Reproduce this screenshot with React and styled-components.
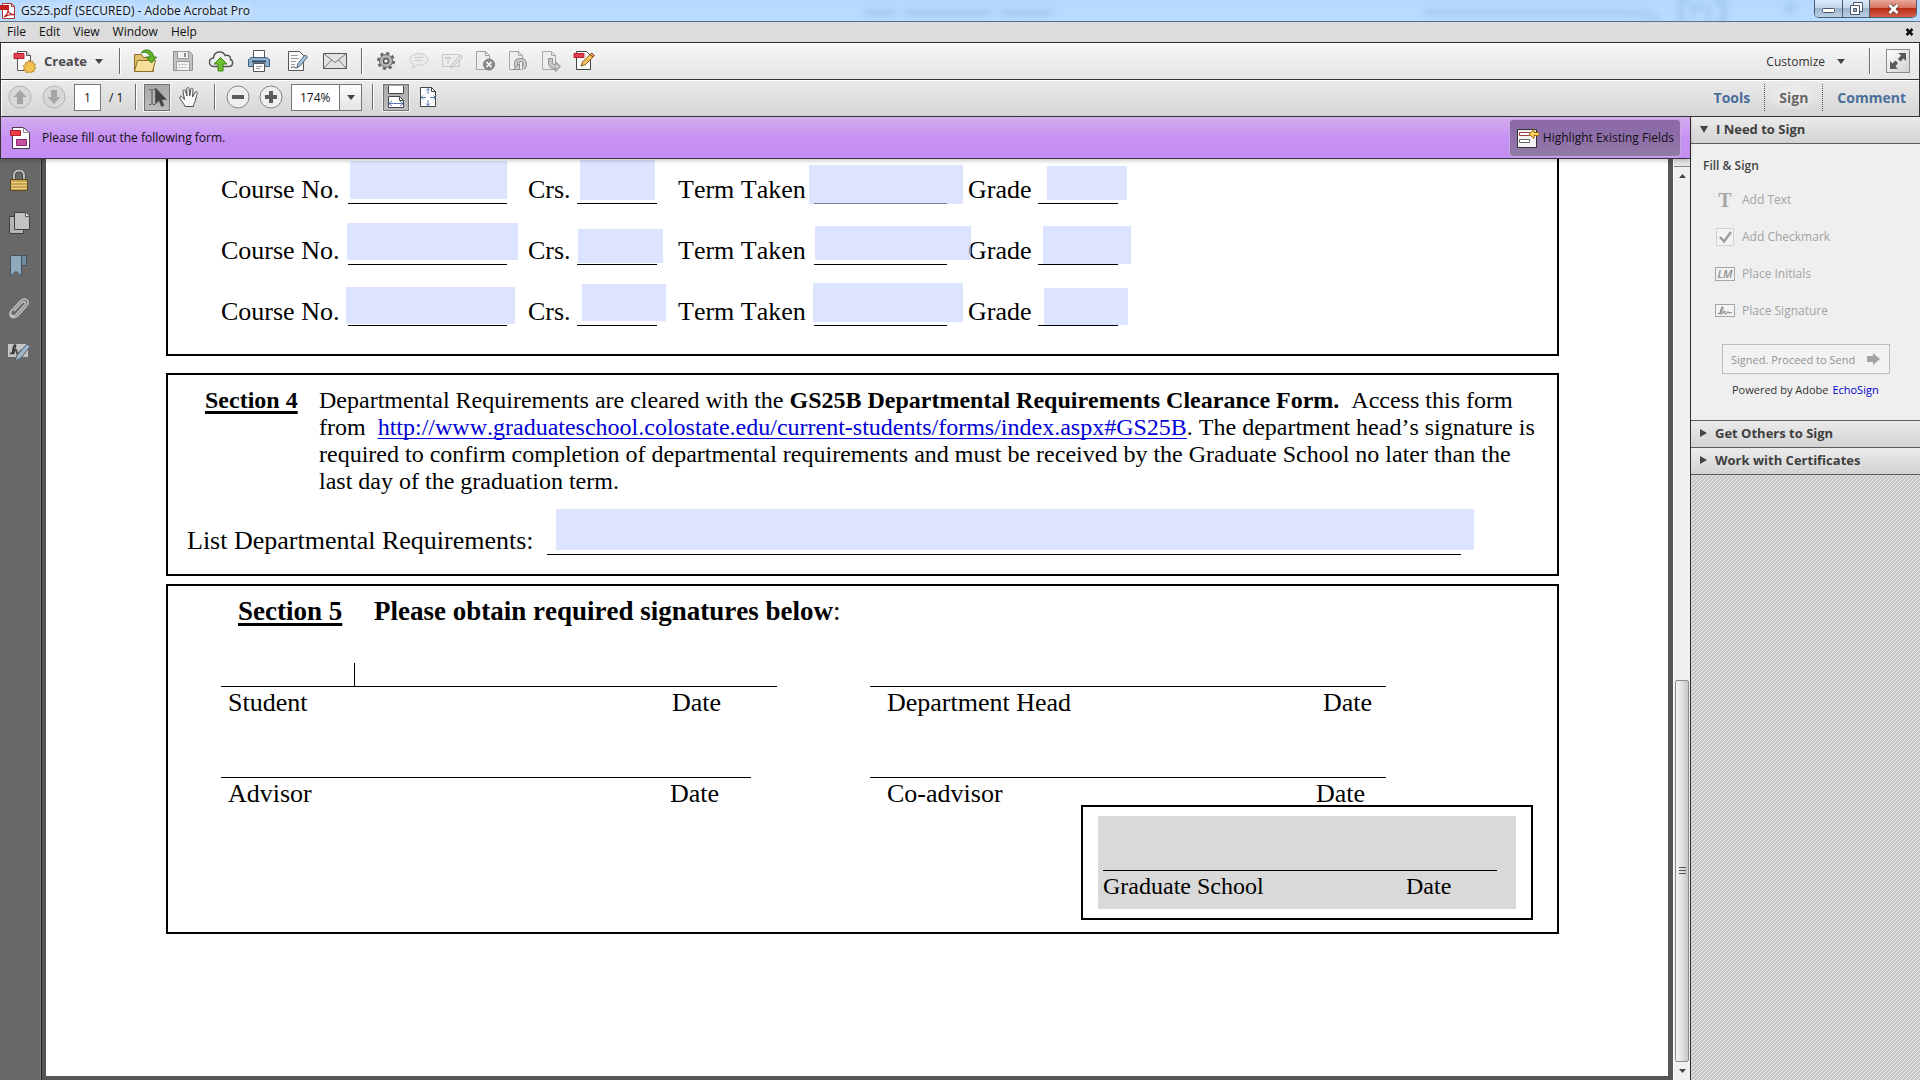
import React, { useState } from 'react';
import styled, { createGlobalStyle, css } from 'styled-components';

const GlobalStyle = createGlobalStyle`
  * {
    box-sizing: border-box;
  }
  body {
    margin: 0;
    overflow: hidden;
    font-family: "Open Sans", "Noto Sans", sans-serif;
    font-size: 12px;
    color: #111;
  }
  button, input, select {
    font-family: inherit;
    font-size: inherit;
    color: inherit;
    margin: 0;
    padding: 0;
    border-radius: 0;
  }
`;

const Window = styled.div`
  display: flex;
  flex-direction: column;
  height: 100vh;
  background: #686868;
`;

/* ---------- title bar and menu ---------- */

const TitleBar = styled.header`
  position: relative;
  display: flex;
  align-items: center;
  height: 22px;
  background: linear-gradient(#b4d8fd, #badcff);
  border-bottom: 1px solid #5d6f86;
`;

const Title = styled.h1`
  margin: 0;
  padding: 0 8px 0 4px;
  font-size: 12px;
  font-weight: 400;
  line-height: 20px;
  text-shadow: 0 0 6px #fff, 0 0 8px #fff;
`;

const Glass = styled.svg`
  position: absolute;
  top: 0;
  right: 0;
  width: 1100px;
  height: 21px;
  pointer-events: none;
`;

const WindowControls = styled.div`
  position: relative;
  display: flex;
  align-self: flex-start;
  margin-left: auto;
  margin-right: 3px;
  height: 18px;
  border: 1px solid #4c5d72;
  border-top: 0;
  border-radius: 0 0 5px 5px;
  overflow: hidden;
`;

const ControlButton = styled.button`
  display: flex;
  align-items: center;
  justify-content: center;
  width: ${({ $close }) => ($close ? '47px' : '27px')};
  border: 0;
  border-left: ${({ $first }) => ($first ? '0' : '1px solid #4c5d72')};
  background: ${({ $close }) => ($close
    ? 'linear-gradient(#e8a99c, #d8745f 45%, #b92e14 50%, #d2604a)'
    : 'linear-gradient(#dcebfa, #c2d6ea 45%, #9db4cb 50%, #b9d0e6)')};
`;

const MenuBar = styled.nav`
  display: flex;
  align-items: center;
  height: 21px;
  padding-left: 7px;
  padding-right: 6px;
  gap: 13px;
  background: #dcdcdc;
  border-bottom: 1px solid #2b2b2b;
`;

const MenuItem = styled.button`
  border: 0;
  background: none;
  line-height: 20px;
`;

const CloseDocument = styled(MenuItem)`
  display: flex;
  margin-left: auto;
`;

/* ---------- toolbars ---------- */

const Toolbar = styled.div`
  display: flex;
  align-items: center;
  height: 37px;
  padding-right: 9px;
  padding-bottom: ${({ $dark }) => ($dark ? '2px' : '0')};
  border: 1px solid #333;
  border-top: 0;
  box-shadow: inset 1px 1px 0 #fff;
  background: ${({ $dark }) => ($dark
    ? 'linear-gradient(#ebebeb, #d5d5d5)'
    : 'linear-gradient(#f6f6f6, #e5e5e5)')};
`;

const Separator = styled.span`
  width: 1px;
  height: 26px;
  margin: 0 ${({ $gap }) => $gap || 8}px;
  background: #6a6a6a;
  box-shadow: 1px 0 0 #fff;
`;

const ToolButton = styled.button`
  display: flex;
  align-items: center;
  justify-content: center;
  flex: none;
  width: ${({ $width }) => $width || 38}px;
  height: 28px;
  border: 0;
  background: none;
  ${({ $pressed }) => $pressed && css`
    width: 26px;
    height: 27px;
    border: 1px solid #707070;
    outline: 1px solid #f4f4f4;
    background: linear-gradient(#a9a9a9, #bdbdbd);
  `}
`;

const CreateButton = styled.button`
  display: flex;
  align-items: center;
  width: 101px;
  margin-left: 11px;
  gap: 8px;
  border: 0;
  background: none;
  font-size: 13px;
  font-weight: 700;
  color: #4a4a4a;
`;

const CustomizeButton = styled.button`
  display: flex;
  align-items: center;
  gap: 12px;
  margin-left: auto;
  margin-right: 16px;
  border: 0;
  background: none;
  color: #333;
`;

const ExpandButton = styled.button`
  display: flex;
  align-items: center;
  justify-content: center;
  width: 24px;
  height: 24px;
  margin-left: 8px;
  border: 1px solid #8a8a8a;
  background: linear-gradient(135deg, #fff, #d0d0d0);
`;

const PageInput = styled.input`
  width: 27px;
  height: 27px;
  margin-left: 5px;
  border: 1px solid #777;
  background: #fff;
  text-align: center;
`;

const PageCount = styled.span`
  width: 26px;
  padding-left: 8px;
`;

const ZoomBox = styled.div`
  position: relative;
  width: 71px;
  height: 27px;
  margin-left: 4px;
`;

const ZoomSelect = styled.select`
  appearance: none;
  width: 100%;
  height: 100%;
  padding-left: 8px;
  border: 1px solid #777;
  background: #fff;
`;

const ZoomArrow = styled.span`
  position: absolute;
  top: 1px;
  right: 1px;
  bottom: 1px;
  display: flex;
  align-items: center;
  justify-content: center;
  width: 22px;
  border-left: 1px solid #777;
  background: linear-gradient(#fdfdfd, #e4e4e4);
  pointer-events: none;
`;

const Tabs = styled.div`
  display: flex;
  margin-left: auto;
`;

const Tab = styled.button`
  height: 27px;
  padding: 0 14px;
  border: 0;
  border-left: ${({ $first }) => ($first ? '0' : '1px dotted #555')};
  background: ${({ $active }) => ($active
    ? 'radial-gradient(closest-side, #f2f2f2, transparent)'
    : 'none')};
  font-size: 14px;
  font-weight: 700;
  color: ${({ $active }) => ($active ? '#666' : '#4a6e9b')};
  &:last-child {
    padding-right: 4px;
  }
`;

/* ---------- body ---------- */

const Body = styled.div`
  display: flex;
  flex: 1;
  min-height: 0;
`;

const Main = styled.div`
  display: flex;
  flex: 1;
  flex-direction: column;
  min-width: 0;
`;

const MessageBar = styled.div`
  position: relative;
  z-index: 1;
  display: flex;
  align-items: center;
  justify-content: space-between;
  height: 42px;
  padding: 0 9px 0 8px;
  border-left: 1px solid #333;
  border-bottom: 1px solid #3b3440;
  background: linear-gradient(#d3adef, #c690f4 55%, #c38df3);
  box-shadow: 0 2px 4px rgba(0, 0, 0, 0.2);
`;

const Message = styled.p`
  display: flex;
  align-items: center;
  gap: 11px;
  margin: 0;
`;

const HighlightButton = styled.button`
  display: flex;
  align-items: center;
  gap: 4px;
  height: 38px;
  padding: 0 6px;
  border: 1px solid #c7a9dc;
  border-radius: 4px;
  background: linear-gradient(#8a6aa6, #8f6daa 50%, #917ba4);
`;

const Viewer = styled.div`
  display: flex;
  flex: 1;
  min-height: 0;
`;

const SideStrip = styled.aside`
  display: flex;
  flex-direction: column;
  align-items: center;
  gap: 15px;
  width: 42px;
  padding: 7px 4px 0 0;
  border-right: 1px solid #1e1e1e;
  background: #686868;
  box-shadow: inset -1px 0 0 #7e7e7e;
`;

const StripButton = styled.button`
  display: flex;
  align-items: center;
  justify-content: center;
  width: 28px;
  height: 28px;
  border: 0;
  background: none;
`;

const Canvas = styled.main`
  display: flex;
  flex: 1;
  min-width: 0;
  padding: 0 5px 4px 4px;
  background: #565656;
`;

const Sheet = styled.form`
  flex: 1;
  min-width: 0;
  padding: 0 109px 0 120px;
  background: #fff;
  font-family: "Liberation Serif", "Times New Roman", serif;
  font-size: 26px;
  font-kerning: none;
  line-height: 32px;
  color: #000;
`;

const Section = styled.section`
  border: 2px solid #000;
`;

const CourseSection = styled(Section)`
  display: flex;
  flex-direction: column;
  gap: 16px;
  padding: 0 0 28px 53px;
  border-top: 0;
`;

const CourseRow = styled.div`
  display: grid;
  grid-template-columns: 127px 180px 49px 101px 136px 154px 70px 80px;
  align-items: end;
  height: 45px;
  line-height: 28px;
`;

const Blank = styled.div`
  position: relative;
  width: ${({ $width }) => ($width ? `${$width}px` : 'auto')};
  height: 28px;
  border-bottom: 1px solid #000;
`;

// fill-in field laid over a printed blank, as a PDF viewer highlights it
const Field = styled.input`
  position: absolute;
  left: ${({ $left }) => $left}px;
  bottom: ${({ $bottom }) => $bottom}px;
  width: ${({ $width }) => $width};
  height: ${({ $height }) => $height}px;
  border: 0;
  outline: 0;
  background: rgba(198, 210, 255, 0.6);
`;

const ClearanceSection = styled(Section)`
  margin-top: 17px;
  padding: 12px 19px 19px;
`;

const Clause = styled.div`
  display: grid;
  grid-template-columns: 114px 1fr;
  margin-left: 18px;
  font-size: 24px;
  line-height: 27px;
`;

const SectionName = styled.h2`
  margin: 0;
  font-size: inherit;
  font-weight: 700;
  text-decoration: underline;
  text-decoration-thickness: 3px;
  text-underline-offset: 3px;
  text-decoration-skip-ink: none;
`;

const ClauseText = styled.p`
  margin: 0;
`;

const FormLink = styled.a`
  color: #0000d8;
  text-decoration-thickness: 1px;
  text-underline-offset: 3px;
  text-decoration-skip-ink: none;
`;

const RequirementsRow = styled.div`
  display: grid;
  grid-template-columns: 360px 1fr;
  margin: 32px 77px 0 0;
  line-height: 28px;
`;

const SignatureSection = styled(Section)`
  display: flex;
  flex-direction: column;
  margin-top: 8px;
  padding: 9px 24px 12px 53px;
`;

const SignatureHeading = styled.div`
  display: grid;
  grid-template-columns: 136px 1fr;
  margin-left: 17px;
  font-size: 27px;
`;

const SignatureTitle = styled.p`
  margin: 0;
`;

const SignatureGrid = styled.div`
  display: grid;
  grid-template-columns: 649px 1fr;
  row-gap: 58px;
  margin-top: 59px;
`;

const Signature = styled.div`
  position: relative;
  display: grid;
  grid-template-columns: ${({ $dateAt }) => $dateAt}px 1fr;
  width: ${({ $width }) => $width}px;
  border-top: 1px solid #000;
`;

const Signer = styled.span`
  padding-left: ${({ $indent }) => $indent}px;
`;

const Caret = styled.span`
  position: absolute;
  left: 133px;
  bottom: 33px;
  width: 1px;
  height: 23px;
  background: #000;
`;

const OfficeBox = styled.div`
  align-self: flex-end;
  width: 452px;
  margin-top: -5px;
  padding: 9px 15px;
  border: 2px solid #000;
`;

const OfficeUse = styled.div`
  height: 93px;
  padding: 54px 19px 0 5px;
  background: #d9d9d9;
  font-size: 24px;
  line-height: 30px;
`;

const OfficeLine = styled.div`
  display: grid;
  grid-template-columns: 303px 1fr;
  border-top: 1px solid #000;
`;

const ScrollBar = styled.div`
  display: flex;
  flex-direction: column;
  align-items: center;
  width: 17px;
  background: #f0f0f0;
  border-left: 1px solid #fff;
`;

const SplitBox = styled.div`
  width: 100%;
  height: 8px;
  border-bottom: 1px solid #888;
  background: #e6e6e6;
`;

const ScrollButton = styled.button`
  display: flex;
  align-items: center;
  justify-content: center;
  width: 17px;
  height: 18px;
  border: 0;
  background: none;
`;

const Track = styled.div`
  flex: 496;
`;

const Thumb = styled.div`
  display: flex;
  flex: 381;
  flex-direction: column;
  align-items: center;
  justify-content: center;
  gap: 2px;
  width: 14px;
  border: 1px solid #8b8b8b;
  border-radius: 2px;
  background: linear-gradient(90deg, #f5f5f5, #e4e4e4 45%, #c6c6c8);
`;

const Grip = styled.span`
  width: 7px;
  height: 1px;
  background: #555;
`;

/* ---------- sign panel ---------- */

const Panel = styled.aside`
  display: flex;
  flex-direction: column;
  width: 230px;
  border-left: 1px solid #2c2c2c;
  background: #c9c9c9 linear-gradient(135deg, #ececec 12.5%, #c6c6c6 12.5% 50%, #ececec 50% 62.5%, #c6c6c6 62.5%) 0 0 / 4px 4px;
`;

const PanelHeader = styled.button`
  display: flex;
  align-items: center;
  gap: 8px;
  height: 27px;
  padding: 0 0 2px 9px;
  border: 0;
  border-bottom: 1px solid #5c5c5c;
  background: linear-gradient(#ebebeb, #d3d3d3);
  font-size: 13px;
  font-weight: 700;
  text-align: left;
  color: #3f3f3f;
`;

const PanelBody = styled.div`
  height: 277px;
  padding: 12px 12px 0;
  background: #efefef;
  border-bottom: 1px solid #5c5c5c;
`;

const PanelTitle = styled.h3`
  margin: 0 0 5px;
  font-size: 12px;
  font-weight: 600;
  line-height: 20px;
  color: #444;
`;

const PanelAction = styled.button`
  display: flex;
  align-items: center;
  gap: 7px;
  height: 37px;
  padding-left: 12px;
  border: 0;
  background: none;
  color: #a3a3a3;
`;

const IconSlot = styled.span`
  display: flex;
  justify-content: center;
  width: 20px;
`;

const LetterIcon = styled.span`
  font-family: "Liberation Serif", serif;
  font-size: 20px;
  font-weight: 700;
  line-height: 20px;
  color: #a6a6a6;
`;

const SendButton = styled.button`
  display: flex;
  align-items: center;
  justify-content: space-between;
  width: 168px;
  height: 30px;
  margin: 15px 0 0 19px;
  padding: 0 9px 0 8px;
  border: 1px solid #bdbdbd;
  background: #f2f2f2;
  font-size: 11px;
  color: #939393;
`;

const Powered = styled.p`
  margin: 6px 0 0 29px;
  font-size: 11px;
  line-height: 20px;
  color: #333;
`;

const EchoLink = styled.a`
  margin-left: 1px;
  color: #0000d0;
  text-decoration: none;
`;

/* ---------- icons ---------- */

const Svg = ({ size = 24, w, h, children }) => (
  <svg
    width={w || size}
    height={h || size}
    viewBox={`0 0 ${w || size} ${h || size}`}
    fill='none'
    stroke='#555'
    aria-hidden='true'
  >
    {children}
  </svg>
);

const Arrow = ({ dir = 'down', w = 8, h = 5, color = '#444' }) => {
  const points = {
    down: `0,0 ${w},0 ${w / 2},${h}`,
    up: `0,${h} ${w},${h} ${w / 2},0`,
    right: `0,0 ${w},${h / 2} 0,${h}`,
  };
  return (
    <Svg w={w} h={h}><polygon points={points[dir]} fill={color} stroke='none' /></Svg>
  );
};

const AcrobatIcon = () => (
  <Svg w={17} h={18}>
    <path d='M2.500 1.500h9l3 3v12h-12z' fill='#fff' stroke='#a33' />
    <path d='M11.500 1.500v3h3' stroke='#a33' />
    <path d='M0 3h9v5H0z' fill='#c11f1f' stroke='none' />
    <path d='M4 15c3-2 4.500-6 4-9-1 3 2 7 6 6.500-4-.5-7 .5-10 2.500z' stroke='#c11f1f' strokeWidth='1.300' />
  </Svg>
);

const CreateIcon = () => (
  <Svg w={24} h={24}>
    <path d='M5.500 2.500h9l4 4v15h-13z' fill='#fafafa' />
    <path d='M14.500 2.500v4h4' fill='#ddd' />
    <path d='M2 4.500h10v5H2z' fill='#e2404a' stroke='#b3202a' />
    <path d='M17 11l1.500 2 2.300-.8.2 2.400 2.400.6-1 2.300 1.600 1.700-2.100 1.200.1 2.400-2.400-.2-1.300 2-1.800-1.600-2.200.9-.5-2.300-2.300-.6 1-2.200-1.300-2 2.200-1.100.2-2.300 2.400.1z' fill='#f2bf52' stroke='#c08a2b' />
  </Svg>
);

const OpenIcon = () => (
  <Svg w={26} h={26}>
    <path d='M2.500 23.500v-17h7l2 3h10v14z' fill='#e0c06c' stroke='#8f6d22' />
    <path d='M2.500 23.500l3-11h18l-3 11z' fill='#f6df9b' stroke='#8f6d22' />
    <path d='M9 5c3-5 12-4 12.500 4h3l-5 6-5.500-6H18c-.5-4-5-6-9-4z' fill='#63b329' stroke='#3a7d14' />
  </Svg>
);

const SaveIcon = () => (
  <Svg w={22} h={22}>
    <path d='M1.500 1.500h16l3 3v16h-19z' fill='#c2c2c2' stroke='#8f8f8f' />
    <path d='M5.500 1.500h11v7h-11zM4.500 11.500h13v9h-13z' fill='#f1f1f1' stroke='#9a9a9a' />
    <path d='M12 3h2v4h-2z' fill='#8f8f8f' stroke='none' />
    <path d='M6.500 14.500h9M6.500 17.500h9' stroke='#b5b5b5' strokeDasharray='2 1' />
  </Svg>
);

const CloudIcon = () => (
  <Svg w={26} h={22}>
    <path d='M6 16.500c-6-.5-6-8-.5-8.500C6 1 15 0 17 5.500c4-.8 6 1 5.500 4 3.500 1.500 2.500 7-1.500 7z' fill='#f0f0f0' stroke='#555' strokeWidth='1.400' />
    <path d='M12.500 7.500l6.500 6.500h-4v7h-5v-7H6z' fill='#6cc031' stroke='#3c8713' />
  </Svg>
);

const PrintIcon = () => (
  <Svg w={24} h={24}>
    <path d='M6.500 1.500h11v9h-11z' fill='#fdfdfd' />
    <path d='M1.500 10.500l3-2h15l3 2v7h-21z' fill='#8fb0cf' stroke='#3f5f80' />
    <path d='M5 12.500h14' stroke='#2f4a66' strokeWidth='2' />
    <path d='M6.500 14.500h11v8h-11z' fill='#fdfdfd' />
    <path d='M9 17.500h6M9 19.500h4' stroke='#999' />
  </Svg>
);

const EditIcon = () => (
  <Svg w={24} h={24}>
    <path d='M3.500 2.500h11l4 4v15h-15z' fill='#fafafa' />
    <path d='M6 6.500h7M6 9.500h8M6 12.500h5M6 15.500h4' stroke='#999' />
    <path d='M12 18.500l1-4L20 6l2.500 2-7 8.500z' fill='#a9c5dc' stroke='#4a6780' />
    <path d='M6 19c2-2 3-1 4-.5s2 .5 3-.5' stroke='#444' />
  </Svg>
);

const MailIcon = () => (
  <Svg w={26} h={18}>
    <path d='M1.500 1.500h23v15h-23z' fill='#e2e2e2' />
    <path d='M1.500 1.500l11.500 9 11.500-9M1.500 16.500l8-8.500M24.500 16.500l-8-8.500' stroke='#777' />
  </Svg>
);

const GearIcon = () => (
  <Svg w={20} h={20}>
    <circle cx='10' cy='10' r='7.500' stroke='#666' strokeWidth='3' strokeDasharray='3 2.890' />
    <circle cx='10' cy='10' r='6.500' fill='#b5b5b5' stroke='#666' />
    <circle cx='10' cy='10' r='2.500' fill='#eee' stroke='#555' strokeWidth='1.500' />
  </Svg>
);

const CommentIcon = () => (
  <Svg w={22} h={18}>
    <path d='M4.500 16.500l1-4c-6-3-4-11 5.500-11s13 10 2 11.500c-2 0-3 0-4-.3z' fill='#ebebeb' stroke='#cacaca' />
    <path d='M6.500 5.500h9M6.500 8.500h7' stroke='#cacaca' />
  </Svg>
);

const TextBoxIcon = () => (
  <Svg w={22} h={18}>
    <path d='M18.500 9v5.500h-17v-12h17' stroke='#c4c4c4' />
    <path d='M4.500 7.500v-2h5v2M7 5.500v6' stroke='#bdbdbd' />
    <path d='M10 16l1-4 8.500-9 2 2-8.500 9z' fill='#e2e2e2' stroke='#c0c0c0' />
  </Svg>
);

const PageDeleteIcon = () => (
  <Svg w={24} h={24}>
    <path d='M3.500 2.500h9l4 4v14h-13z' fill='#eee' stroke='#a2a2a2' />
    <path d='M12.500 2.500v4h4' stroke='#a2a2a2' />
    <circle cx='16' cy='15.500' r='5.500' fill='#8d8d8d' stroke='#777' />
    <path d='M13.500 13l5 5M18.500 13l-5 5' stroke='#fff' strokeWidth='1.500' />
  </Svg>
);

const PageRotateIcon = () => (
  <Svg w={24} h={24}>
    <path d='M3.500 2.500h9l4 4v14h-13z' fill='#eee' stroke='#a8a8a8' />
    <path d='M12.500 2.500v4h4' stroke='#a8a8a8' />
    <path d='M12 19c-4-3-2-8 2.500-8s6 5 2.500 8' stroke='#8e8e8e' strokeWidth='4' />
    <path d='M12 19c-4-3-2-8 2.500-8s6 5 2.500 8' stroke='#d0d0d0' strokeWidth='2' />
    <path d='M7.500 20.500h6v-6z' fill='#d0d0d0' stroke='#8e8e8e' />
  </Svg>
);

const PageExportIcon = () => (
  <Svg w={24} h={24}>
    <path d='M3.500 2.500h9l4 4v14h-13z' fill='#eee' stroke='#a8a8a8' />
    <path d='M12.500 2.500v4h4' stroke='#a8a8a8' />
    <path d='M9.500 9.500h4v4c0 1.500 1 2 3 2v-3l5 5-5 5v-3c-5 0-7-1.500-7-5.500z' fill='#c4c4c4' stroke='#8e8e8e' />
  </Svg>
);

const PencilPageIcon = () => (
  <Svg w={24} h={24}>
    <path d='M4.500 2.500h10l4 4v14h-14z' fill='#fafafa' stroke='#444' />
    <path d='M2 4.500h10v4H2z' fill='#e2404a' stroke='#b3202a' />
    <path d='M9 17l1.500-4L18 5.500l3 2.500-7.500 7.500z' fill='#f4c05a' stroke='#8a5a1e' />
    <path d='M18 5.500l1.500-1.500 3 2.500L21 8z' fill='#e58a80' stroke='#8a5a1e' />
  </Svg>
);

const RoundIcon = ({ kind }) => {
  const shapes = {
    up: 'M12 5l6.500 7H15v7H9v-7H5.500z',
    down: 'M12 19l6.500-7H15V5H9v7H5.500z',
    minus: 'M6 10h12v4H6z',
    plus: 'M10 6h4v4h4v4h-4v4h-4v-4H6v-4h4z',
  };
  const faded = kind === 'up' || kind === 'down';
  return (
    <Svg>
      <circle cx='12' cy='12' r='11' fill={faded ? '#d8d8d8' : '#efefef'} stroke={faded ? '#b4b4b4' : '#848484'} />
      <path d={shapes[kind]} fill={faded ? '#a5a5a5' : '#5c5c5c'} stroke='none' />
    </Svg>
  );
};

const SelectIcon = () => (
  <Svg w={20} h={22}>
    <path d='M2 3.500h2l1 1 1-1h2M5 4v14M2 18.500h2l1-1 1 1h2' stroke='#555' />
    <path d='M8.500 2v16l3.500-3.500 2.500 6 2.500-1-2.500-6h5z' fill='#444' stroke='#444' strokeWidth='.5' />
  </Svg>
);

const HandIcon = () => (
  <Svg w={22} h={22}>
    <path
      d='M7 20.500c-1-3-4-5.500-5-8.500-.5-2 1.500-2.500 2.500-1l2 2.500L5 5.500c-.3-2 1.700-2.500 2.300-.7L9 10 8.700 3c0-2 2.300-2 2.500 0l.5 7 1-6.500c.3-2 2.500-1.500 2.300.5L14.500 11 17 6.500c1-1.700 2.800-.6 2.200 1-1 3-1.200 6-2.700 9-.6 1.300-1 2.500-1 4z'
      fill='#fafafa'
      stroke='#4d4d4d'
    />
  </Svg>
);

const FitWidthIcon = () => (
  <Svg w={20} h={24}>
    <path d='M2.500 1v7.500h15V1' fill='#fff' stroke='#444' />
    <path d='M2.500 22.500v-11h11l4 4v7z' fill='#fff' stroke='#444' />
    <path d='M13.500 11.500v4h4' stroke='#444' />
    <path d='M3 18.500h14M6 16l-3 2.500L6 21M14 16l3 2.500-3 2.500' stroke='#5b7ab8' />
  </Svg>
);

const FitPageIcon = () => (
  <Svg w={20} h={22}>
    <path d='M2.500 1.500h11l4 4v15h-15z' fill='#fff' stroke='#444' />
    <path d='M13.500 1.500v4h4' stroke='#444' />
    <path d='M3 11.500h5M12 11.500h6M10 2.500v5.500M10 14v6M5 9.500l-2 2 2 2M15.500 9.500l2 2-2 2M8 4.500l2-2 2 2M8 17.500l2 2 2-2' stroke='#5b7ab8' />
  </Svg>
);

const ExpandIcon = () => (
  <Svg w={20} h={20}>
    <path d='M10 2h8v8l-2.500-2.500-3 3-2.500-2.500 3-3.500zM10 18H2v-8l2.500 2.500L7.500 9.500l2.500 2.500-2.500 3.500z' fill='#5a5a5a' stroke='none' />
  </Svg>
);

const FormIcon = () => (
  <Svg w={22} h={24}>
    <path d='M3.500 1.500h11l6 5v16h-17z' fill='#fff' stroke='#4a3a50' />
    <path d='M14.500 1.500v5h5' stroke='#8a8a8a' />
    <path d='M1.500 4.500h10v5h-10z' fill='#ee4048' stroke='#b3202a' />
    <path d='M7.500 13.500h10v6h-10z' fill='#c452a0' stroke='#8d2b73' />
  </Svg>
);

const HighlightIcon = () => (
  <Svg w={23} h={22}>
    <path d='M1.500 2.500h19v18h-19z' fill='#f6f1f3' stroke='#333' />
    <path d='M3.500 5.500h10v3h-10z' fill='#fff' stroke='#9c4040' />
    <path d='M3.500 12.500h10v3h-10z' fill='#fff' stroke='#666' />
    <path d='M13 7l5-4.500v3h5v3h-5v3z' fill='#ffd35a' stroke='#a06a10' />
  </Svg>
);

const LockIcon = () => (
  <Svg w={22} h={24}>
    <path d='M6 12V7c0-6 10-6 10 0v5' stroke='#4a4a4a' strokeWidth='4' />
    <path d='M6 12V7c0-6 10-6 10 0v5' stroke='#bdbdbd' strokeWidth='2' />
    <path d='M2.500 11.500h17v11h-17z' fill='#c9a44c' stroke='#5b4a20' />
    <path d='M3 14.500h16M3 17.500h16M3 20.500h16' stroke='#e5cd8b' />
  </Svg>
);

const PagesIcon = () => (
  <Svg w={24} h={24}>
    <path d='M2.500 5.500h14v17h-14z' fill='#b5b5b5' stroke='#3f3f3f' />
    <path d='M7.500 1.500h11l4 4v13h-15z' fill='#c2c2c2' stroke='#3f3f3f' />
    <path d='M18.500 1.500v4h4' fill='#eee' stroke='#555' />
  </Svg>
);

const BookmarkIcon = () => (
  <Svg w={20} h={24}>
    <path d='M11.500 1.500h6v10h-6z' fill='#6f8ba0' stroke='#3f5060' />
    <path d='M1.500 1.500h11v20.500l-5.500-4.500-5.500 4.500z' fill='#8faabd' stroke='#46535e' />
  </Svg>
);

const ClipIcon = () => (
  <Svg w={24} h={24}>
    <path
      d='M7 14l8-8.500c2-2 4.500 0 3 2L9 17.500c-3 3-7.500 0-4.500-4l9-9.500c4.500-4.500 10 0 6.500 4.500L11 18.500c-4 4.500-10.500 1-7-4.500'
      stroke='#c0c0c0'
      strokeWidth='1.600'
    />
  </Svg>
);

const SignIcon = () => (
  <Svg w={26} h={22}>
    <path d='M2 3h20v13H2z' fill='#c4c4c4' stroke='none' />
    <path d='M4 13c4-2 7-9 5-9s-3 9-2 9 2-5 3.500-4-.5 4 1 4 3-3 4-4' stroke='#333' strokeWidth='1.400' />
    <path d='M9 20l2-6L21 3l3 2.500L15 17z' fill='#9fb6c9' stroke='#4f5f6e' />
  </Svg>
);

const CheckIcon = () => (
  <Svg w={18} h={18}>
    <path d='M.5.5h17v17H.5z' fill='#f3f3f3' stroke='#d2d2d2' />
    <path d='M4 9l4 4.500L15 4' stroke='#9e9e9e' strokeWidth='2.500' />
  </Svg>
);

const InitialsIcon = () => (
  <svg width='20' height='14' viewBox='0 0 20 14' aria-hidden='true'>
    <rect x='.5' y='.5' width='19' height='13' fill='#f3f3f3' stroke='#a6a6a6' />
    <text x='10' y='11' textAnchor='middle' fontFamily='Open Sans, sans-serif' fontSize='11' fontStyle='italic' fontWeight='600' fill='#8f8f8f'>LM</text>
  </svg>
);

const SignatureIcon = () => (
  <Svg w={20} h={13}>
    <rect x='.5' y='.5' width='19' height='12' fill='#f3f3f3' stroke='#a6a6a6' />
    <path d='M3 10c4-1 6-7 4.500-7S4.500 10 6 10s2.500-3 3.500-3-.5 3 1 3 1.500-2.500 2.500-2 .5 1.500 4 .5' stroke='#8f8f8f' strokeWidth='1.200' />
  </Svg>
);

const SendArrow = () => (
  <Svg w={13} h={12}>
    <path d='M0 3h6V0l7 6-7 6V9H0z' fill='#a3a3a3' stroke='none' />
  </Svg>
);

/* ---------- data ---------- */

const MENUS = ['File', 'Edit', 'View', 'Window', 'Help'];

const FILE_TOOLS = [
  ['Open', OpenIcon],
  ['Save', SaveIcon],
  ['Save to Acrobat.com', CloudIcon],
  ['Print', PrintIcon],
  ['Edit', EditIcon],
  ['Email', MailIcon],
];

const QUICK_TOOLS = [
  ['Preferences', GearIcon],
  ['Add comment', CommentIcon],
  ['Add text box', TextBoxIcon],
  ['Delete pages', PageDeleteIcon],
  ['Rotate pages', PageRotateIcon],
  ['Export page', PageExportIcon],
  ['Edit document', PencilPageIcon],
];

const STRIP = [
  ['Security', LockIcon],
  ['Page thumbnails', PagesIcon],
  ['Bookmarks', BookmarkIcon],
  ['Attachments', ClipIcon],
  ['Signatures', SignIcon],
];

const COLUMNS = [
  { label: 'Course No.', blank: 159 },
  { label: 'Crs.', blank: 80 },
  { label: 'Term Taken', blank: 133 },
  { label: 'Grade', blank: 80 },
];

// [left, bottom, width, height] against the blank below each field
const COURSES = [
  [[2, 4, 157, 38], [3, 3, 75, 40], [-5, -1, 154, 39], [9, 3, 80, 34]],
  [[-1, 4, 171, 37], [1, 1, 85, 34], [1, 4, 156, 34], [5, 0, 88, 38]],
  [[-2, 1, 169, 37], [5, 4, 84, 37], [-1, 3, 150, 39], [6, 0, 84, 37]],
];

const SIGNATURES = [
  { name: 'Student', width: 556, indent: 7, dateAt: 451, caret: true },
  { name: 'Department Head', width: 516, indent: 17, dateAt: 453 },
  { name: 'Advisor', width: 530, indent: 7, dateAt: 449 },
  { name: 'Co-advisor', width: 516, indent: 17, dateAt: 446 },
];

const PANEL_ACTIONS = [
  ['Add Text', () => <LetterIcon aria-hidden='true'>T</LetterIcon>],
  ['Add Checkmark', CheckIcon],
  ['Place Initials', InitialsIcon],
  ['Place Signature', SignatureIcon],
];

/* ---------- parts ---------- */

const TitleRow = () => (
  <TitleBar>
    <Glass viewBox='0 0 1100 21' aria-hidden='true'>
      <defs>
        <filter id='glass' x='-10%' y='-100%' width='120%' height='300%'>
          <feGaussianBlur stdDeviation='3' />
        </filter>
      </defs>
      <g filter='url(#glass)' fill='none' stroke='#7fa6d0' opacity='.5'>
        <path d='M45 13h30M85 13h85M180 13h52' strokeWidth='4' />
        <path d='M605 13h200c20 0 30 4 35 8' strokeWidth='5' opacity='.7' />
        <circle cx='882' cy='12' r='22' strokeWidth='6' opacity='.7' />
        <path d='M873 20v-14l16 4v12' strokeWidth='4' opacity='.7' />
        <circle cx='970' cy='9' r='3' strokeWidth='4' opacity='.7' />
      </g>
    </Glass>
    <AcrobatIcon />
    <Title>GS25.pdf (SECURED) - Adobe Acrobat Pro</Title>
    <WindowControls>
      <ControlButton $first aria-label='Minimize'>
        <Svg w={13} h={10}><rect x='.5' y='4.500' width='12' height='4' rx='1' fill='#fff' stroke='#4a586c' /></Svg>
      </ControlButton>
      <ControlButton aria-label='Restore'>
        <Svg w={13} h={13}>
          <path d='M3.500.5h9v9h-9z' fill='#fff' stroke='#4a586c' />
          <path d='M.5 3.500h9v9h-9z' fill='#fff' stroke='#4a586c' />
          <path d='M3.500 6.500h3v3h-3z' fill='#9db4cb' stroke='#4a586c' />
        </Svg>
      </ControlButton>
      <ControlButton $close aria-label='Close'>
        <Svg w={13} h={12}>
          <path d='M2.500 2l8 8M10.500 2l-8 8' stroke='#5b3a3a' strokeWidth='4.500' />
          <path d='M2.500 2l8 8M10.500 2l-8 8' stroke='#fff' strokeWidth='2.800' />
        </Svg>
      </ControlButton>
    </WindowControls>
  </TitleBar>
);

const MainToolbar = () => (
  <Toolbar>
    <CreateButton>
      <CreateIcon />
      Create
      <Arrow />
    </CreateButton>
    <Separator $gap={6} />
    {FILE_TOOLS.map(([label, Icon]) => (
      <ToolButton key={label} aria-label={label}><Icon /></ToolButton>
    ))}
    <Separator $gap={7} />
    {QUICK_TOOLS.map(([label, Icon]) => (
      <ToolButton key={label} $width={33} aria-label={label}><Icon /></ToolButton>
    ))}
    <CustomizeButton>
      Customize
      <Arrow />
    </CustomizeButton>
    <Separator />
    <ExpandButton aria-label='Read mode'><ExpandIcon /></ExpandButton>
  </Toolbar>
);

const PageToolbar = () => {
  const [page, setPage] = useState('1');

  return (
    <Toolbar $dark>
      <ToolButton aria-label='Previous page'><RoundIcon kind='up' /></ToolButton>
      <ToolButton $width={30} aria-label='Next page'><RoundIcon kind='down' /></ToolButton>
      <PageInput aria-label='Page number' value={page} onChange={(e) => setPage(e.target.value)} />
      <PageCount>/ 1</PageCount>
      <Separator />
      <ToolButton $pressed aria-label='Select tool'><SelectIcon /></ToolButton>
      <ToolButton aria-label='Hand tool'><HandIcon /></ToolButton>
      <Separator $gap={6} />
      <ToolButton $width={33} aria-label='Zoom out'><RoundIcon kind='minus' /></ToolButton>
      <ToolButton $width={33} aria-label='Zoom in'><RoundIcon kind='plus' /></ToolButton>
      <ZoomBox>
        <ZoomSelect aria-label='Zoom' defaultValue='174%'>
          <option>174%</option>
        </ZoomSelect>
        <ZoomArrow><Arrow /></ZoomArrow>
      </ZoomBox>
      <Separator $gap={10} />
      <ToolButton $pressed aria-label='Fit width'><FitWidthIcon /></ToolButton>
      <ToolButton aria-label='Fit page'><FitPageIcon /></ToolButton>
      <Tabs>
        <Tab $first>Tools</Tab>
        <Tab $active>Sign</Tab>
        <Tab>Comment</Tab>
      </Tabs>
    </Toolbar>
  );
};

const CourseLine = ({ row, fields }) => (
  <CourseRow>
    {COLUMNS.map(({ label, blank }, i) => {
      const [left, bottom, width, height] = fields[i];
      const id = `course-${row}-${i}`;
      return (
        <React.Fragment key={id}>
          <label htmlFor={id}>{label}</label>
          <Blank $width={blank}>
            <Field id={id} $left={left} $bottom={bottom} $width={`${width}px`} $height={height} />
          </Blank>
        </React.Fragment>
      );
    })}
  </CourseRow>
);

const Document = () => (
  <Sheet>
    <CourseSection>
      {COURSES.map((fields, row) => <CourseLine key={row} row={row} fields={fields} />)}
    </CourseSection>

    <ClearanceSection>
      <Clause>
        <SectionName>Section 4</SectionName>
        <ClauseText>
          Departmental Requirements are cleared with the{' '}
          <b>GS25B Departmental Requirements Clearance Form.</b>&nbsp; Access this form from&nbsp;{' '}
          <FormLink href='http://www.graduateschool.colostate.edu/current-students/forms/index.aspx#GS25B'>
            http://www.graduateschool.colostate.edu/current-students/forms/index.aspx#GS25B
          </FormLink>
          . The department head’s signature is required to confirm completion of departmental
          requirements and must be received by the Graduate School no later than the last day of
          the graduation term.
        </ClauseText>
      </Clause>
      <RequirementsRow>
        <label htmlFor='requirements'>List Departmental Requirements:</label>
        <Blank>
          <Field id='requirements' $left={9} $bottom={4} $width='calc(100% + 4px)' $height={41} />
        </Blank>
      </RequirementsRow>
    </ClearanceSection>

    <SignatureSection>
      <SignatureHeading>
        <SectionName>Section 5</SectionName>
        <SignatureTitle><b>Please obtain required signatures below</b>:</SignatureTitle>
      </SignatureHeading>
      <SignatureGrid>
        {SIGNATURES.map(({ name, width, indent, dateAt, caret }) => (
          <Signature key={name} $width={width} $dateAt={dateAt}>
            {caret && <Caret />}
            <Signer $indent={indent}>{name}</Signer>
            <span>Date</span>
          </Signature>
        ))}
      </SignatureGrid>
      <OfficeBox>
        <OfficeUse>
          <OfficeLine>
            <span>Graduate School</span>
            <span>Date</span>
          </OfficeLine>
        </OfficeUse>
      </OfficeBox>
    </SignatureSection>
  </Sheet>
);

const SignPanel = () => (
  <Panel>
    <PanelHeader aria-expanded='true'>
      <Arrow w={8} h={7} />
      I Need to Sign
    </PanelHeader>
    <PanelBody>
      <PanelTitle>Fill &amp; Sign</PanelTitle>
      {PANEL_ACTIONS.map(([label, Icon]) => (
        <PanelAction key={label}>
          <IconSlot><Icon /></IconSlot>
          {label}
        </PanelAction>
      ))}
      <SendButton>
        Signed. Proceed to Send
        <SendArrow />
      </SendButton>
      <Powered>
        Powered by Adobe <EchoLink href='#echosign'>EchoSign</EchoLink>
      </Powered>
    </PanelBody>
    <PanelHeader aria-expanded='false'>
      <Arrow dir='right' w={7} h={8} />
      Get Others to Sign
    </PanelHeader>
    <PanelHeader aria-expanded='false'>
      <Arrow dir='right' w={7} h={8} />
      Work with Certificates
    </PanelHeader>
  </Panel>
);

const App = () => (
  <>
    <GlobalStyle />
    <Window>
      <TitleRow />
      <MenuBar>
        {MENUS.map((item) => <MenuItem key={item}>{item}</MenuItem>)}
        <CloseDocument aria-label='Close document'>
          <Svg w={9} h={8}><path d='M1.500 1l6 6M7.500 1l-6 6' stroke='#111' strokeWidth='2.500' /></Svg>
        </CloseDocument>
      </MenuBar>
      <MainToolbar />
      <PageToolbar />
      <Body>
        <Main>
          <MessageBar>
            <Message>
              <FormIcon />
              Please fill out the following form.
            </Message>
            <HighlightButton>
              <HighlightIcon />
              Highlight Existing Fields
            </HighlightButton>
          </MessageBar>
          <Viewer>
            <SideStrip>
              {STRIP.map(([label, Icon]) => (
                <StripButton key={label} aria-label={label}><Icon /></StripButton>
              ))}
            </SideStrip>
            <Canvas>
              <Document />
            </Canvas>
            <ScrollBar>
              <SplitBox />
              <ScrollButton aria-label='Scroll up'><Arrow dir='up' w={7} h={4} /></ScrollButton>
              <Track />
              <Thumb>
                <Grip />
                <Grip />
                <Grip />
              </Thumb>
              <ScrollButton aria-label='Scroll down'><Arrow w={7} h={4} /></ScrollButton>
            </ScrollBar>
          </Viewer>
        </Main>
        <SignPanel />
      </Body>
    </Window>
  </>
);

export default App;
